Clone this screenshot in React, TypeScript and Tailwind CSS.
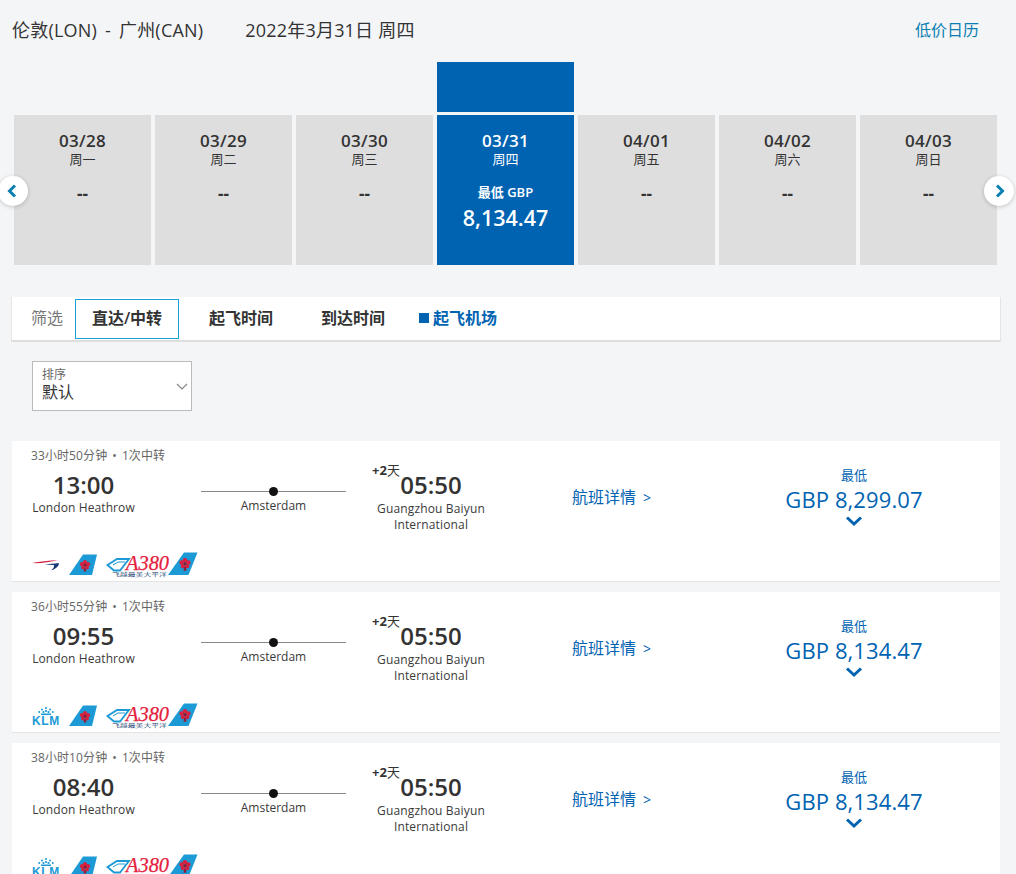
import React from "react";
const FONT = '"Open Sans","Noto Sans CJK SC",sans-serif';
const days = [
  ["03/28", "周一"], ["03/29", "周二"], ["03/30", "周三"], ["03/31", "周四"],
  ["04/01", "周五"], ["04/02", "周六"], ["04/03", "周日"],
];
function Flower({ x, y, s = 1 }: { x: number; y: number; s?: number }) {
  return (
    <g transform={`translate(${x} ${y}) scale(${s})`}>
      <circle cx="0" cy="-3.200" r="2" fill="#d6213f" />
      <circle cx="-2.900" cy="-1.300" r="2" fill="#d6213f" />
      <circle cx="2.900" cy="-1.300" r="2" fill="#d6213f" />
      <circle cx="-1.900" cy="1.800" r="1.900" fill="#d6213f" />
      <circle cx="1.900" cy="1.800" r="1.900" fill="#d6213f" />
      <circle cx="0" cy="-0.300" r="1.300" fill="#7a2038" />
      <path d="M-.8 2.500h1.600l.5 3.300h-2.600z" fill="#8f1f38" />
    </g>
  );
}
function Tail() {
  return (
    <svg width="28" height="22" viewBox="0 0 28 22" className="block">
      <path d="M14 .5H28L23 21H0z" fill="#1c9ad6" />
      <Flower x={16} y={11.500} s={1.05} />
    </svg>
  );
}
function A380() {
  return (
    <svg width="92" height="24" viewBox="0 0 92 24" className="block overflow-visible">
      <path d="M1.500 13 11 7h12L14 18.500H8z" fill="#fff" stroke="#1c9ad6" strokeWidth="1.800" />
      <path d="M7 13 12 10h7" fill="none" stroke="#1c9ad6" strokeWidth="1" />
      <text x="20" y="17.500" fontSize="20" fontStyle="italic" fill="#e5203c" stroke="#e5203c" strokeWidth="0.25" textLength="43" lengthAdjust="spacingAndGlyphs" style={{ fontFamily: '"Liberation Serif",serif' }}>A380</text>
      <path d="M78 .5h13.500L82.500 23H62z" fill="#1c9ad6" />
      <Flower x={79} y={12} s={1.15} />
      <text x="6" y="23.500" fontSize="5" fill="#2b4a78" textLength="55" lengthAdjust="spacingAndGlyphs" style={{ fontFamily: '"Noto Sans CJK SC",sans-serif' }}>飞越最美大平洋</text>
    </svg>
  );
}
function BA() {
  return (
    <svg width="29" height="14" viewBox="0 0 29 14" className="block">
      <path d="M0 5C8 3.500 17 2 27 2 19 3.800 9 5.500 0 5z" fill="#d6213f" />
      <path d="M13 6C18 6 23 5.500 27.500 4.800c1.300 2.200-2 5.700-7.500 7.700 2.300-2 3.500-4 2.500-5.500C19 6.900 16 6.500 13 6z" fill="#1d3a78" />
    </svg>
  );
}
function KLM() {
  return (
    <div className="flex flex-col items-center w-[28px] text-[#1c9ad6]">
      <svg width="16" height="8" viewBox="0 0 16 8" className="block" fill="#1c9ad6">
        <circle cx="8" cy="1" r="1" />
        <circle cx="4" cy="2.500" r="1" /><circle cx="12" cy="2.500" r="1" />
        <circle cx="1.200" cy="5" r="1" /><circle cx="14.800" cy="5" r="1" />
        <circle cx="5.500" cy="5" r="1.100" /><circle cx="10.500" cy="5" r="1.100" /><circle cx="8" cy="4" r="1.100" />
        <rect x="3" y="6.500" width="10" height="1.500" />
      </svg>
      <span className="text-[12px] leading-[10px] mt-[1px] font-bold tracking-[0.6px]" style={{ fontFamily: '"Liberation Sans",sans-serif' }}>KLM</span>
    </div>
  );
}
function Chevron({ dir }: { dir: "l" | "r" }) {
  return (
    <svg width="10" height="14" viewBox="0 0 10 14" className="block">
      <path d={dir === "l" ? "M8 1.500 2.500 7 8 12.500" : "M2 1.500 7.500 7 2 12.500"} fill="none" stroke="#0a7fb0" strokeWidth="3" />
    </svg>
  );
}
function Flight({ d, stops, dep, price, logo }: { d: string; stops: string; dep: string; price: string; logo: React.ReactNode }) {
  return (
    <div className="h-[141px] bg-white border-b border-[#e4e4e4] flex flex-col shrink-0 mb-[10px]">
      <div className="flex h-[105px] shrink-0">
        <div className="w-[171px] pl-[19px] pt-[7px] shrink-0 relative">
          <div className="text-[12px] leading-[16px] text-[#666] whitespace-nowrap tracking-[0.1px]">{d}<span className="mx-[5px]">•</span>{stops}</div>
          <div className="w-[105px] text-center text-[24px] leading-[30px] font-semibold text-[#333] mt-[6px]">{dep}</div>
          <div className="w-[105px] text-center text-[12px] leading-[16px] tracking-[0.1px] text-[#3a3a3a] whitespace-nowrap">London Heathrow</div>
        </div>
        <div className="w-[145px] shrink-0 flex flex-col items-center pt-[50px] ml-[18px]">
          <div className="relative w-full h-px bg-[#888]">
            <div className="absolute left-[68px] top-[-4px] w-[9px] h-[9px] rounded-full bg-[#111]" />
          </div>
          <div className="text-[12px] leading-[16px] text-[#3a3a3a] mt-[6px]">Amsterdam</div>
        </div>
        <div className="w-[120px] shrink-0 ml-[25px] pt-[29px] relative text-center">
          <div className="absolute left-[1px] top-[21px] text-[13px] leading-[16px] text-[#333] whitespace-nowrap"><span className="font-bold">+2</span>天</div>
          <div className="text-[24px] leading-[30px] font-semibold text-[#333]">05:50</div>
          <div className="text-[12px] leading-[16px] tracking-[0.15px] text-[#3a3a3a] mt-[1px]">Guangzhou Baiyun<br />International</div>
        </div>
        <div className="w-[150px] shrink-0 ml-[81px] pt-[45px] text-[16px] leading-[22px] text-[#0063b2] whitespace-nowrap">航班详情<span className="text-[14px] ml-[7px]">&gt;</span></div>
        <div className="w-[200px] shrink-0 ml-[32px] pt-[25px] flex flex-col items-center text-[#0063b2]">
          <div className="text-[13px] leading-[18px]">最低</div>
          <div className="text-[22px] leading-[30px] tracking-[0.1px] whitespace-nowrap">{price}</div>
          <svg width="18" height="11" viewBox="0 0 18 11" className="block mt-[2px]"><path d="M2 1.500l7 6.500 7-6.500" fill="none" stroke="#0063b2" strokeWidth="3" /></svg>
        </div>
      </div>
      <div className="flex items-end pl-[20px] h-[24px] mt-[6px] shrink-0">{logo}</div>
    </div>
  );
}
function Logos({ first }: { first: React.ReactNode }) {
  return (
    <div className="flex items-end gap-[9px]">
      <div className="w-[28px] h-[22px] flex items-center">{first}</div>
      <Tail />
      <A380 />
    </div>
  );
}
export default function App() {
  return (
    <div className="w-[1016px] h-[874px] overflow-hidden bg-[#f4f5f7] relative" style={{ fontFamily: FONT }}>
      <div className="flex items-center h-[62px] pl-[12px] pr-[37px] text-[18px] leading-[24px] text-[#333] pb-[2px]">
        <span className="whitespace-nowrap tracking-[0.2px]">伦敦(LON)<span className="mx-[8px]">-</span>广州(CAN)</span>
        <span className="ml-[42px] whitespace-nowrap tracking-[0.2px]">2022年3月31日 周四</span>
        <span className="ml-auto text-[16px] text-[#0a7fb0]">低价日历</span>
      </div>
      <div className="flex gap-[4px] pl-[14px] h-[50px]">
        {days.map((x, i) => <div key={x[0]} className={`w-[137px] h-full ${i === 3 ? "bg-[#0063b2]" : ""}`} />)}
      </div>
      <div className="relative flex gap-[4px] pl-[14px] mt-[3px] h-[150px]">
        {days.map((x, i) => {
          const on = i === 3;
          return (
            <div key={x[0]} className={`w-[137px] h-full flex flex-col items-center pt-[15px] ${on ? "bg-[#0063b2] text-white" : "bg-[#dedede] text-[#333]"}`}>
              <div className="text-[17px] leading-[22px] font-semibold tracking-[0.3px]">{x[0]}</div>
              <div className="text-[13px] leading-[16px] -mt-[1px]">{x[1]}</div>
              {on ? (
                <>
                  <div className="text-[13px] leading-[16px] font-semibold mt-[17px]">最低 GBP</div>
                  <div className="text-[21.5px] leading-[28px] font-semibold mt-[4px]">8,134.47</div>
                </>
              ) : (
                <div className="text-[17px] leading-[22px] font-bold mt-[16px]">--</div>
              )}
            </div>
          );
        })}
        <button className="absolute left-[-2px] top-[61px] w-[30px] h-[30px] rounded-full bg-white shadow-[0_1px_4px_rgba(0,0,0,0.2)] flex items-center justify-center pr-[2px]"><Chevron dir="l" /></button>
        <button className="absolute left-[984px] top-[61px] w-[30px] h-[30px] rounded-full bg-white shadow-[0_1px_4px_rgba(0,0,0,0.2)] flex items-center justify-center pl-[2px]"><Chevron dir="r" /></button>
      </div>
      <div className="mx-[12px] mt-[32px] h-[45px] w-[988px] bg-white border-b-2 border-[#dedede] shadow-[-1px_0_0_#e4e4e4,1px_0_0_#e4e4e4] flex items-center text-[16px] pl-[19px] pb-[2px] pt-[1px]">
        <span className="text-[16px] text-[#777] w-[44px]">筛选</span>
        <span className="w-[104px] h-[40px] mt-[2px] pb-[2px] border border-[#1a9fd8] flex items-center justify-center font-semibold text-[#333]">直达/中转</span>
        <span className="ml-[30px] font-semibold text-[#333]">起飞时间</span>
        <span className="ml-[48px] font-semibold text-[#333]">到达时间</span>
        <span className="ml-[34px] w-[10px] h-[10px] bg-[#0063b2]" />
        <span className="ml-[4px] font-semibold text-[#0063b2]">起飞机场</span>
      </div>
      <div className="ml-[32px] mt-[19px] w-[160px] h-[50px] bg-white border border-[#bbb] relative pl-[9px] pt-[6px]">
        <div className="text-[12px] leading-[14px] text-[#666]">排序</div>
        <div className="text-[16px] leading-[20px] text-[#333]">默认</div>
        <svg width="12" height="8" viewBox="0 0 12 8" className="absolute right-[3px] top-[21px]"><path d="M1 1l5 5 5-5" fill="none" stroke="#888" strokeWidth="1.200" /></svg>
      </div>
      <div className="mx-[12px] w-[988px] mt-[30px] flex flex-col">
        <Flight d="33小时50分钟" stops="1次中转" dep="13:00" price="GBP 8,299.07" logo={<Logos first={<BA />} />} />
        <Flight d="36小时55分钟" stops="1次中转" dep="09:55" price="GBP 8,134.47" logo={<Logos first={<KLM />} />} />
        <Flight d="38小时10分钟" stops="1次中转" dep="08:40" price="GBP 8,134.47" logo={<Logos first={<KLM />} />} />
      </div>
    </div>
  );
}
